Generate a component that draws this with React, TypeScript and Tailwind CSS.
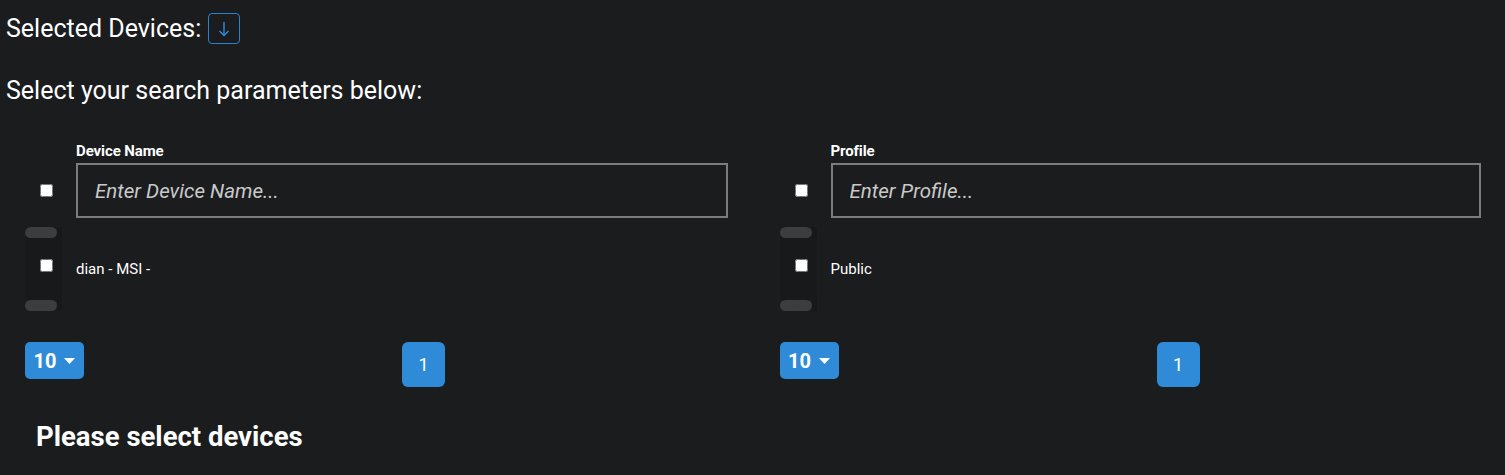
import React from 'react';

interface SearchColumnProps {
  label: string;
  placeholder: string;
  value: string;
  className?: string;
}

const Pill = () => (
  <div className="flex">
    <div className="h-[11px] w-[32px] rounded-full bg-[#3c3d3f]" />
    <div className="h-[11px] w-[5px] bg-[#171819]" />
  </div>
);

const SearchColumn: React.FC<SearchColumnProps> = ({ label, placeholder, value, className = '' }) => {
  return (
    <div className={className}>
      <div className="grid grid-cols-[51px_1fr]">
        <div />
        <div className="text-[15px] font-bold leading-[18px] mb-[3px] tracking-[-0.1px]">{label}</div>
        <div className="flex items-center pl-[15px]">
          <input type="checkbox" className="m-0 w-[13px] h-[13px]" />
        </div>
        <input
          type="text"
          placeholder={placeholder}
          className="h-[55px] w-full bg-transparent border-2 border-[#7c7c7c] px-[17px] text-[20.5px] italic text-white placeholder:text-[#c9c9c9] outline-none"
        />
      </div>

      <div className="mt-[9px] w-[37px] bg-[#18191b]">
        <Pill />
      </div>
      <div className="grid grid-cols-[51px_1fr] h-[62px]">
        <div className="bg-[#18191b] w-[37px] pl-[15px] pt-[21px]">
          <input type="checkbox" className="m-0 w-[13px] h-[13px] block" />
        </div>
        <div className="pt-[22px] text-[15px] leading-[18px]">{value}</div>
      </div>
      <Pill />

      <div className="mt-[31px] flex items-start">
        <button className="h-[37px] w-[59px] rounded-[5px] bg-[#2f8bd8] flex items-center justify-center gap-[8px] text-white text-[20px] font-bold">
          10
          <svg width="11" height="6" viewBox="0 0 11 6">
            <path d="M0 0 L11 0 L5.5 6 Z" fill="white" />
          </svg>
        </button>
        <button className="ml-[318px] h-[45px] w-[43px] rounded-[6px] bg-[#2f8bd8] text-white text-[18px] flex items-center justify-center">
          1
        </button>
      </div>
    </div>
  );
};

export default function App() {
  return (
    <div className="min-h-screen bg-[#1b1c1e] text-white font-['Roboto',sans-serif]">
      <div className="pl-[6px] pt-[13px] flex items-center">
        <span className="text-[25px] leading-[31px]">Selected Devices:</span>
        <button className="ml-[7px] h-[31px] w-[32px] rounded-[4px] border border-[#2b82cf] flex items-center justify-center">
          <svg width="14" height="16" viewBox="0 0 14 16" fill="none" stroke="#2f8bd8" strokeWidth="1.4">
            <path d="M7 1 V14.5" />
            <path d="M2.5 10 L7 14.5 L11.5 10" />
          </svg>
        </button>
      </div>

      <div className="pl-[6px] mt-[31px] text-[25px] leading-[31px]">Select your search parameters below:</div>

      <div className="grid grid-cols-2 mt-[36px]">
        <SearchColumn
          className="pl-[25px] pr-[25px]"
          label="Device Name"
          placeholder="Enter Device Name..."
          value="dian - MSI -"
        />
        <SearchColumn
          className="pl-[27px] pr-[24px]"
          label="Profile"
          placeholder="Enter Profile..."
          value="Public"
        />
      </div>

      <h2 className="pl-[36px] mt-[32px] text-[27.5px] font-bold leading-[36px]">Please select devices</h2>
    </div>
  );
}
